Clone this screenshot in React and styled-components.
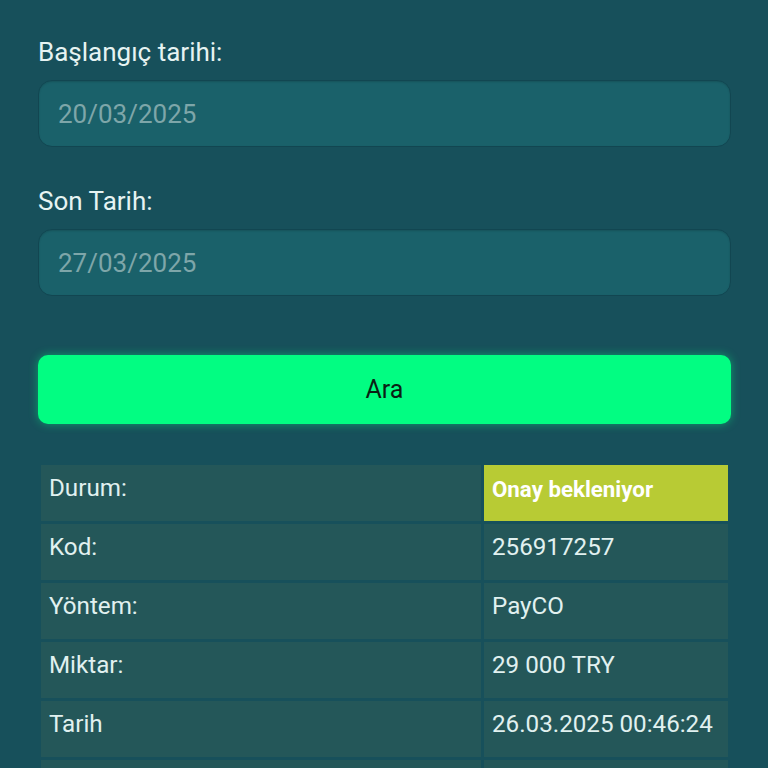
import React from "react";
import styled, { createGlobalStyle } from "styled-components";

const Global = createGlobalStyle`
  html, body { margin: 0; padding: 0; background: #17505b; }
  body { font-family: Roboto, "Noto Sans", "Liberation Sans", sans-serif; }
  * { box-sizing: border-box; }
`;

const Page = styled.div`
  min-height: 768px;
  background: #17505b;
  padding: 37px 37px 0 38px;
  display: flex;
  flex-direction: column;
`;

const Field = styled.div`
  display: flex;
  flex-direction: column;
  gap: 13px;
  margin-bottom: ${(p) => p.$mb}px;
`;

const Label = styled.label`
  font-size: 26px;
  line-height: 30px;
  color: #e6f3f2;
`;

const Input = styled.div`
  height: 67px;
  border-radius: 14px;
  background: #1a616a;
  border: 1.5px solid #124651;
  box-shadow: inset 0 1px 2px rgba(0, 0, 0, 0.15);
  display: flex;
  align-items: center;
  padding-left: 19px;
  font-size: 26px;
  color: #7ea6a9;
`;

const Button = styled.button`
  height: 69px;
  border: none;
  border-radius: 10px;
  background: #02fd82;
  box-shadow: 0 0 10px rgba(0, 255, 130, 0.45);
  font-family: Roboto, "Noto Sans", sans-serif;
  font-size: 25px;
  color: #0b1f14;
  margin-bottom: 38px;
`;

const Table = styled.div`
  display: grid;
  grid-template-columns: 440px 1fr;
  gap: 3px;
  padding: 3px;
`;

const Cell = styled.div`
  height: 56px;
  background: ${(p) => (p.$status ? "#b8cb34" : "#245759")};
  color: ${(p) => (p.$status ? "#ffffff" : "#e1f1f0")};
  font-size: ${(p) => (p.$status ? "22.3px" : "24.2px")};
  font-weight: ${(p) => (p.$status ? 700 : 400)};
  padding: ${(p) => (p.$status ? "10px 8px" : "9px 8px")};
  line-height: 28px;
  white-space: nowrap;
`;

const rows = [
  ["Durum:", "Onay bekleniyor", true],
  ["Kod:", "256917257"],
  ["Yöntem:", "PayCO"],
  ["Miktar:", "29 000 TRY"],
  ["Tarih", "26.03.2025 00:46:24"],
  ["", ""],
];

export default function App() {
  return (
    <>
      <Global />
      <Page>
        <Field $mb={39}>
          <Label>Başlangıç tarihi:</Label>
          <Input>20/03/2025</Input>
        </Field>
        <Field $mb={59}>
          <Label>Son Tarih:</Label>
          <Input>27/03/2025</Input>
        </Field>
        <Button>Ara</Button>
        <Table>
          {rows.map(([k, v, s], i) => (
            <React.Fragment key={i}>
              <Cell>{k}</Cell>
              <Cell $status={s}>{v}</Cell>
            </React.Fragment>
          ))}
        </Table>
      </Page>
    </>
  );
}
